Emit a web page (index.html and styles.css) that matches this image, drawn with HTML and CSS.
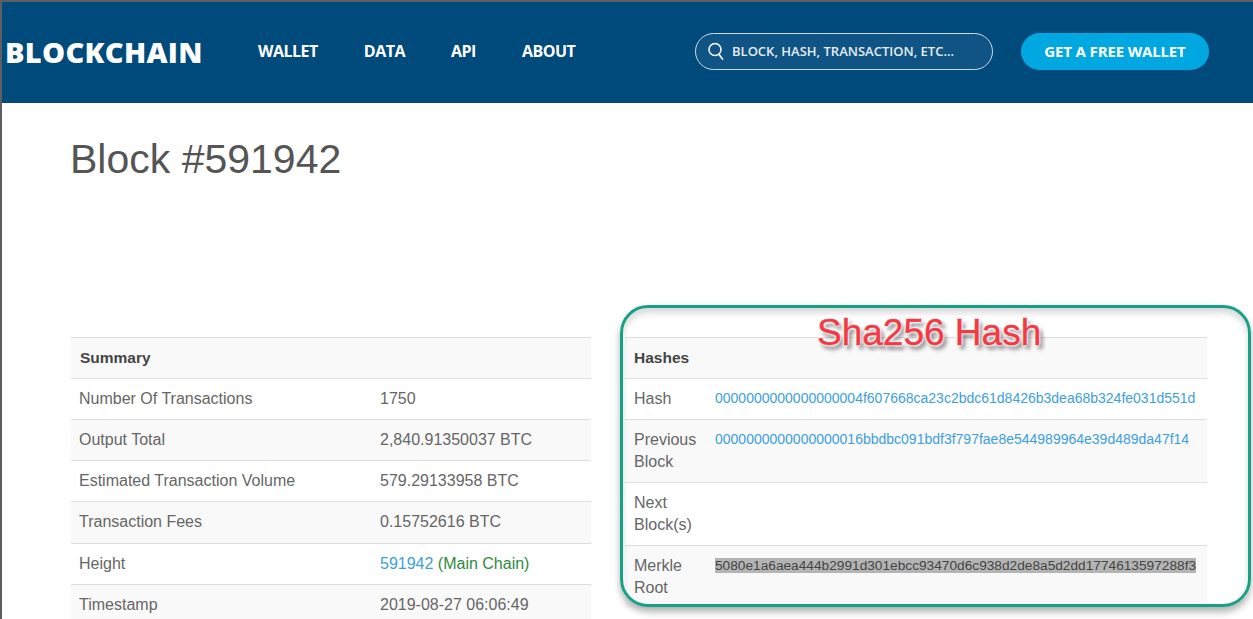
FILE: index.html
```html
<!DOCTYPE html>
<html lang="en">
<head>
    <meta charset="UTF-8">
    <title>Block #591942</title>
    <link rel="stylesheet" href="styles.css">
</head>
<body>
    <header class="topbar">
        <a class="logo">BLOCKCHAIN</a>
        <nav class="nav">
            <a>WALLET</a>
            <a>DATA</a>
            <a>API</a>
            <a>ABOUT</a>
        </nav>
        <div class="search">
            <svg class="search-icon" width="18" height="20" viewBox="0 0 18 20">
                <circle cx="8" cy="8.5" r="6" fill="none" stroke="#fff" stroke-width="1.5"/>
                <path d="M12 13.5l3.5 4.5" fill="none" stroke="#fff" stroke-width="1.7" stroke-linecap="round"/>
            </svg>
            <span>BLOCK, HASH, TRANSACTION, ETC...</span>
        </div>
        <a class="wallet-btn">GET A FREE WALLET</a>
    </header>

    <main class="content">
        <h1 class="title">Block #591942</h1>
        <div class="tables">
            <table class="info summary">
                <tr class="head"><th colspan="2">Summary</th></tr>
                <tr><td class="label">Number Of Transactions</td><td>1750</td></tr>
                <tr class="alt"><td class="label">Output Total</td><td>2,840.91350037 BTC</td></tr>
                <tr><td class="label">Estimated Transaction Volume</td><td>579.29133958 BTC</td></tr>
                <tr class="alt tall"><td class="label">Transaction Fees</td><td>0.15752616 BTC</td></tr>
                <tr><td class="label">Height</td><td><a class="link">591942</a> <span class="main-chain">(Main Chain)</span></td></tr>
                <tr class="alt"><td class="label">Timestamp</td><td>2019-08-27 06:06:49</td></tr>
            </table>

            <table class="info hashes">
                <tr class="head"><th colspan="2">Hashes</th></tr>
                <tr><td class="label">Hash</td><td><a class="link">0000000000000000004f607668ca23c2bdc61d8426b3dea68b324fe031d551d</a></td></tr>
                <tr class="alt"><td class="label">Previous Block</td><td><a class="link">0000000000000000016bbdbc091bdf3f797fae8e544989964e39d489da47f14</a></td></tr>
                <tr><td class="label">Next Block(s)</td><td></td></tr>
                <tr class="alt"><td class="label">Merkle Root</td><td><span class="selected">5080e1a6aea444b2991d301ebcc93470d6c938d2de8a5d2dd1774613597288f3</span></td></tr>
            </table>
        </div>
    </main>

    <div class="callout"></div>
    <div class="callout-text">Sha256 Hash</div>
</body>
</html>
```

FILE: styles.css
```css
* {
    margin: 0;
    padding: 0;
    box-sizing: border-box;
}
html, body {
    width: 100%;
    height: 100%;
    overflow: hidden;
}
body {
    position: relative;
    font-family: "Liberation Sans", Arial, sans-serif;
    background-color: #fff;
    color: #666;
    border-top: 2px solid #5f5f5f;
    border-left: 2px solid #5f5f5f;
}
.topbar {
    display: flex;
    align-items: center;
    height: 101px;
    padding-bottom: 2px;
    background-color: #004a7c;
    border-bottom: 1px solid #0a3f7c;
    color: #fff;
}
.logo {
    width: 256px;
    padding-left: 3px;
    font-family: "Open Sans", sans-serif;
    font-size: 29px;
    font-weight: 800;
    letter-spacing: 0.3px;
}
.nav {
    display: flex;
    gap: 46px;
    width: 437px;
    font-family: "Open Sans", sans-serif;
    font-size: 16px;
    font-weight: 700;
    letter-spacing: -0.5px;
}
.search {
    display: flex;
    align-items: center;
    gap: 7px;
    width: 298px;
    height: 37px;
    padding-left: 11px;
    background-color: #0f5485;
    border: 1.5px solid #cfdbe6;
    border-radius: 19px;
    font-family: "Open Sans", sans-serif;
    font-size: 13px;
    font-weight: 600;
    color: #e6eef4;
}
.wallet-btn {
    width: 188px;
    height: 37px;
    margin-left: 28px;
    background-color: #00a7e1;
    border-radius: 19px;
    font-family: "Open Sans", sans-serif;
    font-size: 15px;
    font-weight: 700;
    letter-spacing: -0.15px;
    line-height: 37px;
    text-align: center;
}
.content {
    padding: 33px 45px 0 69px;
}
.title {
    height: 201px;
    margin-left: -1px;
    font-size: 41px;
    font-weight: 400;
    line-height: 46px;
    color: #555;
}
.tables {
    display: flex;
    gap: 34px;
    align-items: flex-start;
}
.info {
    border-collapse: collapse;
    font-size: 16px;
    line-height: 22px;
}
.info tr {
    border-top: 1px solid #ddd;
}
.info th {
    padding: 9px;
    font-size: 15.5px;
    text-align: left;
    color: #444;
}
.info td {
    padding: 9px;
    vertical-align: top;
}
.head, .alt {
    background-color: #f9f9f9;
}
.summary {
    width: 520px;
    flex: none;
}
.summary td {
    padding-left: 8px;
}
.summary .label {
    width: 301px;
}
.summary .tall td {
    padding-bottom: 10px;
}
.hashes {
    width: 582px;
    flex: none;
}
.hashes .label {
    width: 81px;
}
.hashes td:last-child {
    padding-top: 8px;
    font-size: 14px;
    white-space: nowrap;
}
.link {
    color: #3ca0dc;
}
.main-chain {
    color: #2e8b3d;
}
.selected {
    background-color: #b4b4b4;
    color: #444;
    font-size: 13.7px;
}
.callout {
    position: absolute;
    left: 618px;
    top: 303px;
    width: 631px;
    height: 302px;
    border: 3px solid #16a085;
    border-radius: 28px;
    box-shadow: 0 5px 7px rgba(0, 0, 0, 0.3), inset 0 5px 6px rgba(0, 0, 0, 0.15);
}
.callout-text {
    position: absolute;
    left: 815px;
    top: 309px;
    font-size: 37px;
    line-height: 44px;
    color: #f23a45;
    -webkit-text-stroke: 0.4px #f23a45;
    text-shadow: 0 0 3px #fff, 0 0 3px #fff, 0 0 3px #fff, 3px 4px 4px rgba(0, 0, 0, 0.6);
}
```
